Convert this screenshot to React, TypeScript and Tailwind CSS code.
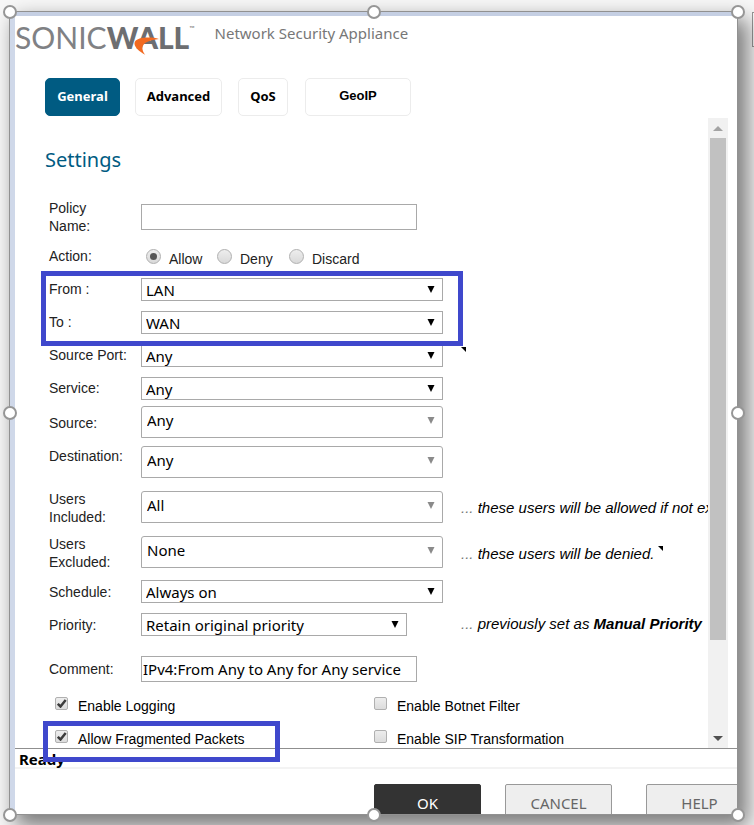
import { ReactNode } from "react";
import clsx from "clsx";

const SANS = "font-['Noto_Sans','Open_Sans',sans-serif]";
const ARIAL = "font-['Liberation_Sans',Arial,sans-serif]";

// Resize handles around the selected frame
const handles = [
  "-left-[7px] -top-[7px]",
  "left-1/2 -ml-[7px] -top-[7px]",
  "-right-2 -top-[7px]",
  "-left-[7px] top-1/2 -mt-[7px]",
  "-right-2 top-1/2 -mt-[7px]",
  "-left-[7px] -bottom-2",
  "left-1/2 -ml-[7px] -bottom-2",
  "-right-2 -bottom-2",
];

const tabs = [
  { name: "General", style: "w-[75px] bg-[#005b82] border-[#005b82] text-white" },
  { name: "Advanced", style: "w-[87px] ml-[15px] bg-white border-[#ececec] text-black" },
  { name: "QoS", style: "w-[50px] ml-4 bg-white border-[#ececec] text-black" },
];

function Logo() {
  return (
    <div className="relative flex items-baseline font-[Lato,sans-serif] text-[30px] leading-[42px] text-[#6d6e71]">
      <span className="text-[#808184]">SONIC</span>
      <span className="font-black">WALL</span>
      <span className="self-start pt-1 text-[7px] leading-4">™</span>
      <svg className="absolute left-[119px] top-[21px]" width="26" height="18" viewBox="0 0 26 18" aria-hidden="true">
        <path d="M25 2C17-.3 3 0 .8 5c-1.600 4 3.200 9 10.400 12.800C7.400 13 7 8 13 5 16 3.300 21 2.500 25 2Z" fill="#f26a21" />
      </svg>
    </div>
  );
}

function Row({
  label,
  id,
  height = "h-[33px]",
  labelStyle,
  children,
}: {
  label: string;
  id?: string;
  height?: string;
  labelStyle?: string;
  children: ReactNode;
}) {
  const text = clsx("w-[92px] shrink-0 pr-2 whitespace-pre-line leading-[18px]", labelStyle);
  return (
    <div className={clsx("flex items-center", height)}>
      {id ? (
        <label htmlFor={id} className={text}>
          {label}
        </label>
      ) : (
        <span className={text}>{label}</span>
      )}
      {children}
    </div>
  );
}

function Select({ id, value, tall, width = "w-[302px]" }: { id: string; value: string; tall?: boolean; width?: string }) {
  return (
    <div className={clsx("relative shrink-0", width)}>
      <select
        id={id}
        defaultValue={value}
        className={clsx(
          "block w-full appearance-none border border-[#a9a9a9] bg-white text-[15px] text-black",
          SANS,
          tall ? "h-8 rounded-t-[3px] pl-[5px] pb-[2px]" : "h-[23px] pl-1 leading-5"
        )}
      >
        <option>{value}</option>
      </select>
      <svg
        className={clsx("pointer-events-none absolute right-2", tall ? "top-[11px]" : "top-2")}
        width="8"
        height="7"
        viewBox="0 0 8 7"
        aria-hidden="true"
      >
        <path d="M.5 0h7L4 7Z" fill={tall ? "#8a8a8a" : "#000"} />
      </svg>
    </div>
  );
}

function Radio({ label, checked, width }: { label: string; checked?: boolean; width?: string }) {
  return (
    <label className={clsx("flex items-center", width)}>
      <span className="relative mr-2 mb-[5px] h-[15px] w-[15px]">
        <input
          type="radio"
          name="action"
          defaultChecked={checked}
          className="peer block h-[15px] w-[15px] appearance-none rounded-full border border-[#b0b0b0] bg-linear-to-b from-[#eeeeee] to-[#d9d9d9]"
        />
        <span className="absolute left-1 top-1 hidden h-[7px] w-[7px] rounded-full bg-[#555] peer-checked:block" />
      </span>
      {label}
    </label>
  );
}

function Checkbox({ label, checked }: { label: string; checked?: boolean }) {
  return (
    <label className="flex items-center">
      <span className="relative mr-[10px] mb-[6px] h-[13px] w-[13px]">
        <input
          type="checkbox"
          defaultChecked={checked}
          className="peer block h-[13px] w-[13px] appearance-none rounded-[2px] border border-[#b0b0b0] bg-linear-to-b from-[#ededed] to-[#dcdcdc]"
        />
        <svg
          className="pointer-events-none absolute left-[2px] top-[2px] hidden peer-checked:block"
          width="10"
          height="9"
          viewBox="0 0 10 9"
          aria-hidden="true"
        >
          <path d="M.8 4.800 3.500 7.500 8.700 1" fill="none" stroke="#3c3c3c" strokeWidth="2.500" />
        </svg>
      </span>
      {label}
    </label>
  );
}

const HintMark = ({ className }: { className: string }) => (
  <svg className={className} width="5" height="5" viewBox="0 0 5 5" aria-hidden="true">
    <path d="M0 0h5v5Z" fill="#000" />
  </svg>
);

const Note = ({ children, className }: { children: ReactNode; className?: string }) => (
  <span className={clsx("ml-[18px] whitespace-nowrap text-[15px] italic text-black", className)}>
    <span className="text-[#777]">... </span>
    {children}
  </span>
);

function SettingsForm() {
  return (
    <form className={clsx("min-w-0 flex-1 overflow-hidden pl-[30px] text-[14px] text-[#222]", ARIAL)}>
      <h1 className={clsx("pt-[26px] pb-[22px] text-[20px] leading-8 text-[#005b82]", SANS)}>Settings</h1>
      <div className="pl-1">
        <Row label={"Policy\nName:"} id="policy-name" height="h-[38px]">
          <input id="policy-name" type="text" className="h-[26px] w-[276px] border border-[#a9a9a9] bg-white px-[1px]" />
        </Row>
        <Row label="Action:" height="h-[37px]" labelStyle="pt-[2px]">
          <div className="flex pl-[5px] pt-[9px]">
            <Radio label="Allow" checked width="w-[71px]" />
            <Radio label="Deny" width="w-[72px]" />
            <Radio label="Discard" />
          </div>
        </Row>
        <div className="relative">
          <Row label="From :" id="from" labelStyle="pb-[2px]">
            <Select id="from" value="LAN" />
          </Row>
          <Row label="To :" id="to" labelStyle="pb-[2px]">
            <Select id="to" value="WAN" />
          </Row>
          <div className="pointer-events-none absolute -left-2 -top-[2px] z-10 h-[75px] w-[422px] border-[5px] border-[#3f48cc]" />
          <HintMark className="absolute left-[412px] top-[74px]" />
        </div>
        <Row label="Source Port:" id="source-port" labelStyle="pb-[2px]">
          <Select id="source-port" value="Any" />
        </Row>
        <Row label="Service:" id="service" labelStyle="pb-[2px]">
          <Select id="service" value="Any" />
        </Row>
        <Row label="Source:" id="source" labelStyle="pt-[3px]">
          <Select id="source" value="Any" tall />
        </Row>
        <Row label="Destination:" id="destination" height="h-[47px]" labelStyle="pb-3">
          <Select id="destination" value="Any" tall />
        </Row>
        <Row label={"Users\nIncluded:"} id="users-included" height="h-[43px]" labelStyle="pt-[3px]">
          <Select id="users-included" value="All" tall />
          <Note className="pt-[3px]">these users will be allowed if not excluded.</Note>
        </Row>
        <Row label={"Users\nExcluded:"} id="users-excluded" height="h-[47px]" labelStyle="pt-[3px]">
          <Select id="users-excluded" value="None" tall />
          <Note className="pt-[6px]">these users will be denied.</Note>
          <HintMark className="ml-1 mb-[6px]" />
        </Row>
        <Row label="Schedule:" id="schedule">
          <Select id="schedule" value="Always on" />
        </Row>
        <Row label="Priority:" id="priority">
          <Select id="priority" value="Retain original priority" width="w-[266px]" />
          <Note className="pl-9">
            previously set as <b>Manual Priority</b>
          </Note>
        </Row>
        <Row label="Comment:" id="comment" height="h-[49px] pt-[6px]">
          <input
            id="comment"
            type="text"
            defaultValue="IPv4:From Any to Any for Any service"
            className={clsx("h-[26px] w-[276px] border border-[#a9a9a9] bg-white px-[1px] text-[15px] text-black", SANS)}
          />
        </Row>
        <div className="grid h-[58px] grid-cols-[319px_1fr] auto-rows-[33px] items-center pl-[6px] text-black">
          <Checkbox label="Enable Logging" checked />
          <Checkbox label="Enable Botnet Filter" />
          <Checkbox label="Allow Fragmented Packets" checked />
          <Checkbox label="Enable SIP Transformation" />
        </div>
      </div>
    </form>
  );
}

function Scrollbar() {
  return (
    <div className="flex w-5 shrink-0 flex-col bg-[#f1f1f1]" aria-hidden="true">
      <div className="flex h-5 items-center justify-center">
        <svg width="10" height="5" viewBox="0 0 10 5">
          <path d="M0 5h10L5 0Z" fill="#a3a3a3" />
        </svg>
      </div>
      <div className="flex-1 px-[2px]">
        <div className="h-[85%] bg-[#c1c1c1]" />
      </div>
      <div className="flex h-5 items-center justify-center">
        <svg width="10" height="5" viewBox="0 0 10 5">
          <path d="M0 0h10L5 5Z" fill="#505050" />
        </svg>
      </div>
    </div>
  );
}

export default function App() {
  return (
    <div className="relative min-h-screen overflow-hidden bg-[#f8f8f8] pt-[11px] pr-4 pb-[10px] pl-[9px]">
      <div className="absolute right-0 top-3 h-[35px] w-[2px] border-y border-l border-[#999] bg-white" />
      <main className="relative border border-[#919191] bg-white shadow-[8px_10px_20px_2px_rgba(0,0,0,0.5)]">
        <div className="overflow-hidden border-l-[5px] border-t-4 border-l-[#cfd8e9] border-t-[#c5cfe3]">
          <header className="flex h-[62px] items-start whitespace-nowrap">
            <Logo />
            <span className={clsx("ml-5 pt-[5px] text-[15px] leading-6 text-[#777]", SANS)}>Network Security Appliance</span>
          </header>

          <nav className="flex pl-[30px] pb-[2px] text-[13px]">
            {tabs.map((tab) => (
              <button
                key={tab.name}
                type="button"
                className={clsx("h-[38px] shrink-0 rounded-[5px] border font-bold", SANS, tab.style)}
              >
                {tab.name}
              </button>
            ))}
            <button
              type="button"
              className={clsx("ml-[17px] h-[38px] w-[106px] shrink-0 rounded-[5px] border border-[#ececec] bg-white pb-[3px] font-bold text-black", ARIAL)}
            >
              GeoIP
            </button>
          </nav>

          <div className="flex pr-[9px]">
            <SettingsForm />
            <Scrollbar />
          </div>

          {/* Status line and dialog buttons */}
          <footer className={clsx("relative border-t border-[#8f8f8f]", SANS)}>
            <div className="h-5 border-b-2 border-[#f3f3f3] pl-1 text-[15px] font-bold leading-5 text-black">Ready</div>
            <div className="pointer-events-none absolute left-7 -top-7 h-[41px] w-[237px] border-[5px] border-[#3f48cc]" />
            <div className="flex h-[45px] justify-end gap-6 overflow-hidden pt-[15px] text-[15px]">
              <button type="button" className="h-[39px] w-[107px] shrink-0 rounded-[2px] border border-[#333] bg-[#333] text-white">
                OK
              </button>
              <button type="button" className="h-[39px] w-[107px] shrink-0 rounded-[2px] border border-[#999] bg-[#eee] text-[#666]">
                CANCEL
              </button>
              <button type="button" className="-mr-4 ml-[10px] h-[39px] w-[107px] shrink-0 rounded-[2px] border border-[#999] bg-[#eee] text-[#666]">
                HELP
              </button>
            </div>
          </footer>
        </div>
        {handles.map((place) => (
          <span key={place} className={clsx("absolute z-20 h-[14px] w-[14px] rounded-full border-2 border-[#969696] bg-white", place)} />
        ))}
      </main>
    </div>
  );
}
